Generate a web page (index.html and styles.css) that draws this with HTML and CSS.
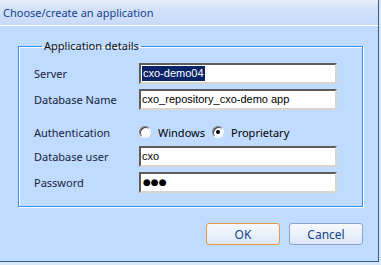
FILE: index.html
```html
<!DOCTYPE html>
<html lang="en">
<head>
    <meta charset="UTF-8">
    <meta name="viewport" content="width=device-width, initial-scale=1.0">
    <title>Choose/create an application</title>
    <link rel="stylesheet" href="styles.css">
</head>
<body>
    <div class="dialog">
        <div class="titlebar">Choose/create an application</div>
        <div class="content">
            <fieldset class="group">
                <legend>Application details</legend>
                <div class="form">
                    <label class="label">Server</label>
                    <div class="textbox"><span class="selected">cxo-demo04</span></div>

                    <label class="label">Database Name</label>
                    <div class="textbox">cxo_repository_cxo-demo app</div>

                    <label class="label auth">Authentication</label>
                    <div class="radios auth">
                        <span class="radio"></span><span class="radio-text">Windows</span>
                        <span class="radio checked"></span><span class="radio-text">Proprietary</span>
                    </div>

                    <label class="label">Database user</label>
                    <div class="textbox">cxo</div>

                    <label class="label">Password</label>
                    <div class="textbox password">&#9679;&#9679;&#9679;</div>
                </div>
            </fieldset>
            <div class="buttons">
                <button class="btn default">OK</button>
                <button class="btn">Cancel</button>
            </div>
        </div>
    </div>
</body>
</html>
```

FILE: styles.css
```css
body {
    margin: 0;
    background: #d6e6fb;
    font-family: "Noto Sans", "Open Sans", sans-serif;
}

.dialog {
    width: 379px;
    height: 262px;
    background: #bfdbff;
    border-right: 1px solid #3e5b85;
    border-bottom: 1px solid #3e5b85;
    box-sizing: border-box;
}

.titlebar {
    height: 25px;
    line-height: 25px;
    padding-left: 3px;
    font-size: 11px;
    color: #15428b;
    background: linear-gradient(#e6eefb, #d3e2fa 35%, #c7dbf9);
    border-bottom: 1px solid #ffffff;
}

.content {
    padding: 12px 15px 0 18px;
}

.group {
    margin: 0;
    padding: 9px 0 13px 15px;
    border: 1px solid #3d8cf2;
    box-shadow: 1px 1px 0 #ffffff, inset 1px 1px 0 #ffffff;
    min-width: 0;
}

.group legend {
    margin-left: 8px;
    padding: 0 2px;
    font-size: 11px;
    color: #111111;
    line-height: 16px;
}

.form {
    display: grid;
    grid-template-columns: 105px 198px;
    row-gap: 5px;
    align-items: center;
}

.label {
    font-size: 11px;
    color: #17233a;
}

.label.auth,
.radios.auth {
    margin-top: 9px;
    margin-bottom: 1px;
}

.textbox {
    height: 21px;
    box-sizing: border-box;
    background: #ffffff;
    border: 2px solid;
    border-color: #5c5c5c #d8d5cf #d8d5cf #5c5c5c;
    font-family: "Liberation Sans", Arial, sans-serif;
    font-size: 11px;
    line-height: 17px;
    padding-left: 1px;
    color: #000000;
    white-space: nowrap;
    overflow: hidden;
}

.selected {
    background: #0a246a;
    color: #ffffff;
    padding: 1px 1px 2px 1px;
}

.password {
    font-family: "DejaVu Sans", sans-serif;
    font-size: 9px;
    padding-left: 2px;
}

.radios {
    display: flex;
    align-items: center;
    height: 16px;
    font-size: 11px;
    color: #000000;
}

.radio {
    width: 12px;
    height: 12px;
    box-sizing: border-box;
    border-radius: 50%;
    border: 1px solid;
    border-color: #808080 #ffffff #ffffff #808080;
    background: radial-gradient(circle, #ffffff 55%, #e6e6e6 70%);
    box-shadow: inset 1px 1px 0 #404040;
    position: relative;
}

.radio.checked::after {
    content: "";
    position: absolute;
    left: 3px;
    top: 3px;
    width: 4px;
    height: 4px;
    border-radius: 50%;
    background: #000000;
}

.radio-text {
    margin: 0 7px 0 7px;
}

.buttons {
    display: flex;
    justify-content: flex-end;
    gap: 9px;
    margin-top: 16px;
}

.btn {
    width: 74px;
    height: 22px;
    padding: 0;
    border: 1px solid #8ea3c4;
    border-radius: 3px;
    background: linear-gradient(#f7f9fd, #ebf1fb 50%, #dbe6f7);
    font-family: "Noto Sans", "Open Sans", sans-serif;
    font-size: 12px;
    color: #15428b;
}

.btn.default {
    border-color: #e39a3d;
}
```
